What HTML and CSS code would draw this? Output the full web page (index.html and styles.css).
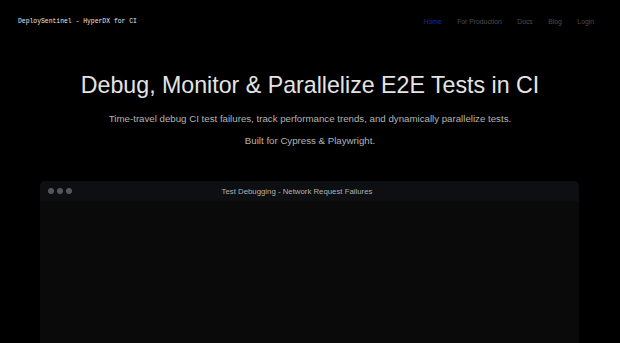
FILE: index.html
```html
<!DOCTYPE html>
<html lang="en">
<head>
  <meta charset="UTF-8">
  <title>DeploySentinel - HyperDX for CI</title>
  <link rel="stylesheet" href="styles.css">
</head>
<body>

<!-- Top bar -->
<header class="topbar">
  <div class="logo">DeploySentinel - HyperDX for CI</div>
  <nav class="nav">
    <a class="nav-link active" href="#">Home</a>
    <a class="nav-link" href="#">For Production</a>
    <a class="nav-link" href="#">Docs</a>
    <a class="nav-link" href="#">Blog</a>
    <a class="nav-link" href="#">Login</a>
  </nav>
</header>

<!-- Hero -->
<section class="hero">
  <h1>Debug, Monitor &amp; Parallelize E2E Tests in CI</h1>
  <p class="sub">Time-travel debug CI test failures, track performance trends, and dynamically parallelize tests.</p>
  <p class="sub">Built for Cypress &amp; Playwright.</p>
</section>

<!-- Demo window -->
<div class="demo">
  <div class="demo-bar">
    <div class="dots">
      <span class="dot"></span>
      <span class="dot"></span>
      <span class="dot"></span>
    </div>
    <div class="demo-title">Test Debugging - Network Request Failures</div>
  </div>
  <div class="demo-body"></div>
</div>

</body>
</html>
```

FILE: styles.css
```css
html, body {
  margin: 0;
  padding: 0;
  height: 100%;
  overflow: hidden;
  background-color: #000;
  font-family: "Liberation Sans", Arial, sans-serif;
}

.topbar {
  display: flex;
  justify-content: space-between;
  align-items: center;
  height: 42px;
  padding: 0 26px 0 18px;
}

.logo {
  font-family: "Liberation Mono", monospace;
  font-size: 6.4px;
  color: #e8e8e8;
}

.nav {
  display: flex;
  gap: 15.5px;
}

.nav-link {
  font-size: 6.8px;
  color: #4d4d4d;
  text-decoration: none;
}

.nav-link.active {
  color: #1d2f8a;
}

.hero {
  text-align: center;
  padding-top: 26px;
}

.hero h1 {
  margin: 0 0 10px;
  font-size: 23.2px;
  font-weight: normal;
  color: #e4e4e4;
  line-height: 34px;
}

.sub {
  margin: 0 0 8px;
  font-size: 9.7px;
  line-height: 14px;
  color: #b4b4b4;
}

.demo {
  margin: 33px 41px 0 40px;
  height: 200px;
  border-radius: 5px;
  overflow: hidden;
  background: #0a0a0a;
}

.demo-bar {
  position: relative;
  display: flex;
  align-items: center;
  justify-content: center;
  height: 20px;
  padding-right: 25px;
  background: #0e0f12;
}

.dots {
  position: absolute;
  left: 8px;
  top: 7px;
  display: flex;
  gap: 3px;
}

.dot {
  width: 6px;
  height: 6px;
  border-radius: 50%;
  background: #55565a;
}

.demo-title {
  font-size: 7.8px;
  color: #b0b0b0;
}

.demo-body {
  height: 180px;
  background: #0a0a0a;
}
```
